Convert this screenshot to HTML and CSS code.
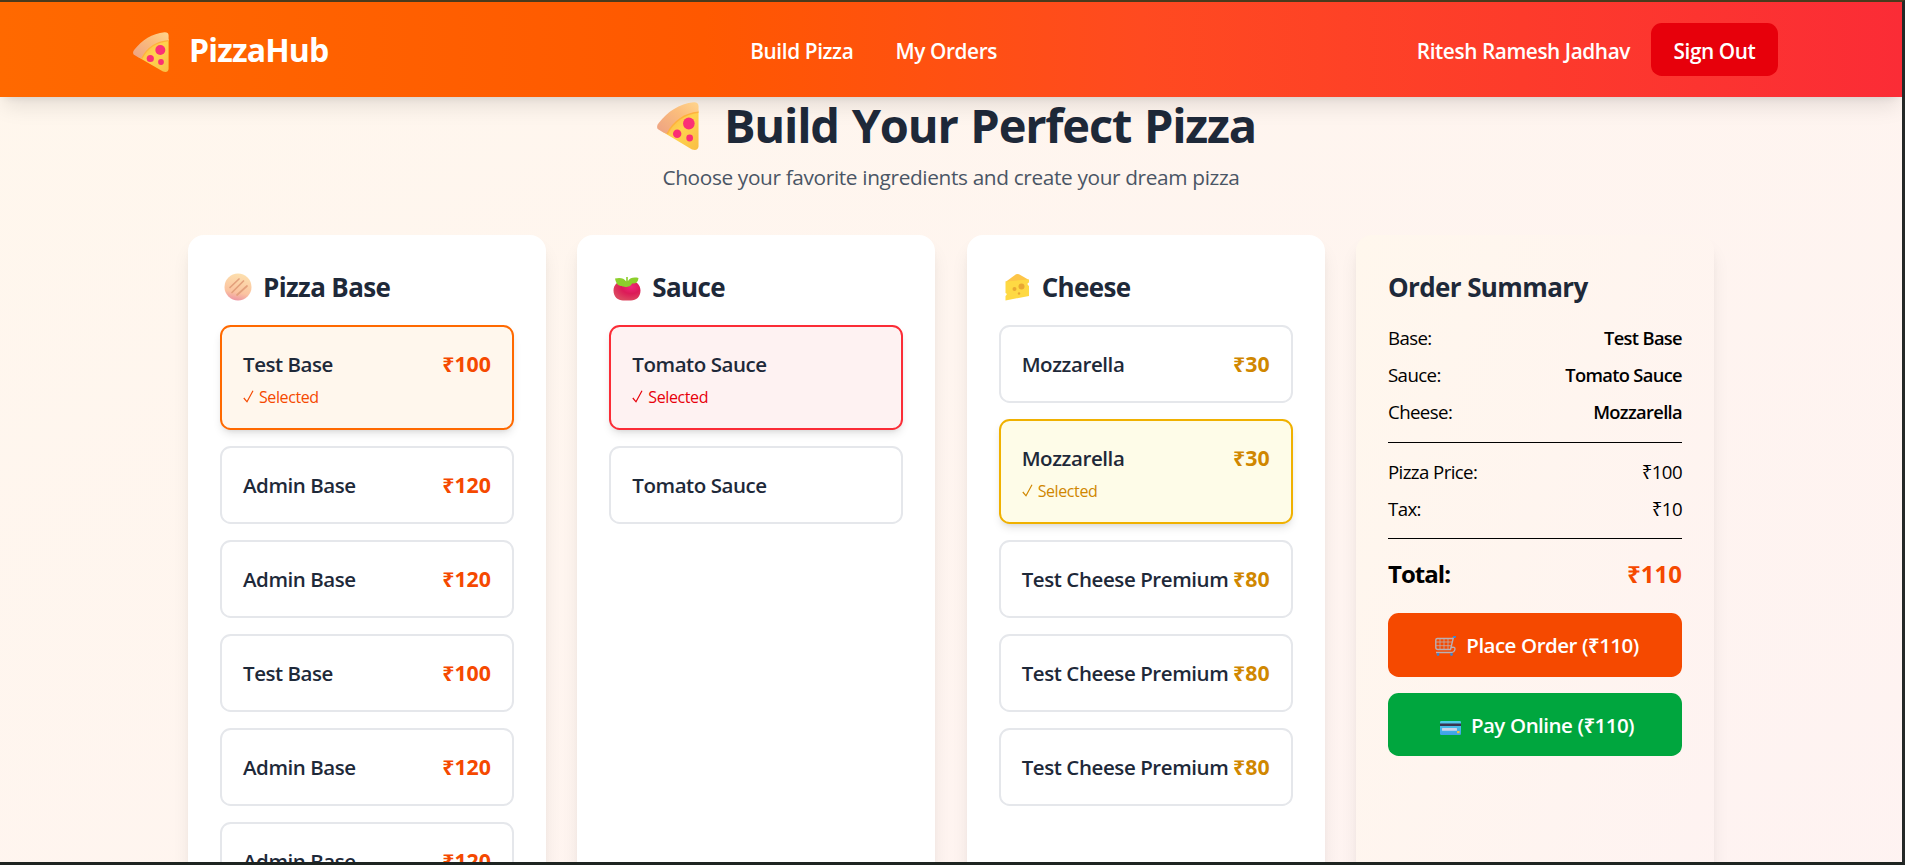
FILE: index.html
```html
<!DOCTYPE html>
<html lang="en">
<head>
<meta charset="utf-8">
<title>PizzaHub</title>
<link rel="stylesheet" href="styles.css">
</head>
<body>
<svg class="defs" aria-hidden="true">
  <defs>
    <linearGradient id="slice" x1="0" y1="0" x2="1" y2="1"><stop offset="0" stop-color="#f9b04a"/><stop offset=".5" stop-color="#ffd34e"/><stop offset="1" stop-color="#f9be45"/></linearGradient>
    <linearGradient id="crust" x1="0" y1="1" x2="1" y2="0"><stop offset="0" stop-color="#eda184"/><stop offset=".6" stop-color="#fbbd7c"/><stop offset="1" stop-color="#ffd58d"/></linearGradient>
    <linearGradient id="bread" x1=".6" y1="0" x2=".4" y2="1"><stop offset="0" stop-color="#fde0ae"/><stop offset=".7" stop-color="#fbc3a0"/><stop offset="1" stop-color="#ec96a4"/></linearGradient>
    <radialGradient id="tomato" cx=".65" cy=".3" r=".7"><stop offset="0" stop-color="#f0277a"/><stop offset=".5" stop-color="#dc1b58"/><stop offset="1" stop-color="#dc4560"/></radialGradient>
    <linearGradient id="card" x1="0" y1="0" x2="0" y2="1"><stop offset="0" stop-color="#4fd0ea"/><stop offset="1" stop-color="#3f9fe8"/></linearGradient>
    <symbol id="pizza" viewBox="0 0 36 40" preserveAspectRatio="none">
      <path fill="url(#slice)" d="M8 22C14 14 23 9 35.600 7V37Q35 41 30 39.500L5 25Z"/>
      <path fill="url(#crust)" d="M.6 22.500Q-.8 20 1.500 17.500C9 8 19 1.500 31.500.2Q35.500 0 35.600 3.500V8.500C24 9.500 14 15.500 8.500 26.500Q4 25 .6 22.500Z"/>
      <path fill="none" stroke="#ffb13d" stroke-width="1.300" d="M35.500 8.600C24 9.700 14 16 8.800 26.500"/>
      <circle cx="27.300" cy="18" r="5" fill="#fb3176"/><circle cx="17.300" cy="26.500" r="3.600" fill="#fb2f74"/><circle cx="28" cy="30" r="2.900" fill="#fb2f74"/>
    </symbol>
  </defs>
</svg>
<div class="screen">
  <header class="topbar">
    <a class="brand"><svg class="brand-icon"><use href="#pizza"/></svg><span>PizzaHub</span></a>
    <nav class="links"><a>Build Pizza</a><a>My Orders</a></nav>
    <div class="account"><span>Ritesh Ramesh Jadhav</span><button class="signout"><span>Sign Out</span></button></div>
  </header>
  <main class="page">
    <h1 class="title"><svg class="title-icon"><use href="#pizza"/></svg><span>Build Your Perfect Pizza</span></h1>
    <p class="subtitle"><span>Choose your favorite ingredients and create your dream pizza</span></p>
    <div class="columns">
      <section class="card base">
        <h2 class="heading"><svg class="heading-icon" viewBox="0 0 28 28"><circle cx="14" cy="14" r="13.500" fill="url(#bread)"/><g stroke="#e3a07c" stroke-width="1.700" stroke-linecap="round"><path d="M6 14.500L15 6M8 19.500L19.500 8M13 22L23 13"/></g></svg><span>Pizza Base</span></h2>
        <ul class="options">
          <li class="option selected"><div class="row"><span class="name">Test Base</span><span class="price">₹100</span></div><div class="mark"><svg class="check" viewBox="0 0 11 13"><path d="M.8 8L4 11.800L10 .8"/></svg><span>Selected</span></div></li>
          <li class="option"><div class="row"><span class="name">Admin Base</span><span class="price">₹120</span></div></li>
          <li class="option"><div class="row"><span class="name">Admin Base</span><span class="price">₹120</span></div></li>
          <li class="option"><div class="row"><span class="name">Test Base</span><span class="price">₹100</span></div></li>
          <li class="option"><div class="row"><span class="name">Admin Base</span><span class="price">₹120</span></div></li>
          <li class="option"><div class="row"><span class="name">Admin Base</span><span class="price">₹120</span></div></li>
        </ul>
      </section>
      <section class="card sauce">
        <h2 class="heading"><svg class="heading-icon" viewBox="0 0 28 28"><path fill="url(#tomato)" d="M14 9C20 6 27.500 10 27.500 17.500C27.500 24 23 27.500 18 27.500H10C5 27.500.5 24 .5 17.500C.5 10 8 6 14 9Z"/><path fill="#8ccf2c" d="M13.200 8.500V4H14.800V8.300C17 4.500 21 4 25.500 5C25 9 23 11 19 10.500C18 14.500 10 14.500 9 13C5 13 3 10.500 2 5.500C6 4.500 11 4.500 13.200 8.500Z"/></svg><span>Sauce</span></h2>
        <ul class="options">
          <li class="option selected"><div class="row"><span class="name">Tomato Sauce</span></div><div class="mark"><svg class="check" viewBox="0 0 11 13"><path d="M.8 8L4 11.800L10 .8"/></svg><span>Selected</span></div></li>
          <li class="option"><div class="row"><span class="name">Tomato Sauce</span></div></li>
        </ul>
      </section>
      <section class="card cheese">
        <h2 class="heading"><svg class="heading-icon" viewBox="0 0 28 28"><path fill="#fdc548" d="M2.500 9L13 1.300Q14.500.5 16 1.300L26 7L25 9Z"/><path fill="#fed943" d="M2.500 8.500L26 6.500V9.500Q23 10.500 26 13V23L2.500 27.500V23Q5 21 2.500 20Z"/><circle cx="18.500" cy="13.500" r="3" fill="#e9a832"/><circle cx="11.500" cy="16" r="2" fill="#e9a832"/><circle cx="16" cy="20.500" r="1.200" fill="#e9a832"/></svg><span>Cheese</span></h2>
        <ul class="options">
          <li class="option"><div class="row"><span class="name">Mozzarella</span><span class="price">₹30</span></div></li>
          <li class="option selected"><div class="row"><span class="name">Mozzarella</span><span class="price">₹30</span></div><div class="mark"><svg class="check" viewBox="0 0 11 13"><path d="M.8 8L4 11.800L10 .8"/></svg><span>Selected</span></div></li>
          <li class="option"><div class="row"><span class="name">Test Cheese Premium</span><span class="price">₹80</span></div></li>
          <li class="option"><div class="row"><span class="name">Test Cheese Premium</span><span class="price">₹80</span></div></li>
          <li class="option"><div class="row"><span class="name">Test Cheese Premium</span><span class="price">₹80</span></div></li>
        </ul>
      </section>
      <section class="card summary">
        <h2 class="heading"><span>Order Summary</span></h2>
        <dl class="lines">
          <div><dt>Base:</dt><dd class="strong">Test Base</dd></div>
          <div><dt>Sauce:</dt><dd class="strong">Tomato Sauce</dd></div>
          <div><dt>Cheese:</dt><dd class="strong">Mozzarella</dd></div>
        </dl>
        <hr>
        <dl class="lines">
          <div><dt>Pizza Price:</dt><dd>₹100</dd></div>
          <div><dt>Tax:</dt><dd>₹10</dd></div>
        </dl>
        <hr>
        <div class="total"><span>Total:</span><span class="amount">₹110</span></div>
        <button class="action place"><svg class="action-icon" viewBox="0 0 21 20"><g fill="none" stroke="#b9b0b4" stroke-width="1.400" stroke-linejoin="round"><path d="M20 1.200H18.500L15.500 13.500H3Q.8 13.500.8 11.500V4Q.8 2.500 2.500 2.500H17.500M16 11.500Q20 10.500 20 13Q19.500 16.500 16 16.500H1"/><path stroke-width=".8" d="M1 6H17M1 9.700H16M5 2.500V13.500M9 2.500V13.500M13 2.500V13.500"/></g><g fill="#3d83cf"><circle cx="3" cy="18.500" r="1.400"/><circle cx="16.500" cy="18.500" r="1.400"/><path d="M18 0h3v1.800h-3z"/></g></svg><span>Place Order (₹110)</span></button>
        <button class="action pay"><svg class="action-icon" viewBox="0 0 21 20"><rect y="5" width="21" height="14" rx="1.200" fill="url(#card)"/><path fill="#3a3350" d="M0 7.500h21v2.500H0z"/><rect x="2" y="12" width="15" height="2.800" rx=".6" fill="#cfd3ea"/><rect x="17" y="15" width="2.600" height="2.200" rx=".5" fill="#f0c445"/></svg><span>Pay Online (₹110)</span></button>
      </section>
    </div>
  </main>
</div>
</body>
</html>
```
FILE: styles.css
```css
* { box-sizing: border-box; margin: 0; padding: 0; }
body { font-family: "Open Sans", "Noto Sans", sans-serif; color: #000; }
button { border: 0; font: inherit; color: inherit; letter-spacing: inherit; }
ul { list-style: none; }
.defs { position: absolute; width: 0; height: 0; }
.screen { height: 865px; overflow: hidden; display: flex; flex-direction: column; border-top: 2px solid #4a3a1c; border-right: 3px solid #242827; border-bottom: 3px solid #1e2421; background: linear-gradient(to bottom right, #fff7ed, #fef2f2) 0 0 / 100% 1150px; }
.topbar { position: relative; flex: none; display: flex; align-items: center; justify-content: space-between; height: 95px; padding: 0 124px; color: #fff; background: linear-gradient(to right, #ff6900, #ff5800 37%, #ff4a20 60%, #fb2c36); box-shadow: 0 13px 20px -4px rgba(0,0,0,.1), 0 5px 8px -5px rgba(0,0,0,.1); }
.brand { display: flex; align-items: center; gap: 20px; padding-left: 9px; font-size: 32px; font-weight: 700; letter-spacing: -.85px; }
.brand-icon { width: 36px; height: 40px; position: relative; top: 2px; }
.links { display: flex; gap: 42px; padding: 2px 0 0 2px; font-size: 20.8px; font-weight: 600; letter-spacing: -.38px; }
.account { display: flex; align-items: center; gap: 21px; font-size: 20.8px; font-weight: 600; letter-spacing: -.42px; }
.account span { position: relative; top: 1px; }
.signout { height: 53px; width: 127px; border-radius: 10.67px; background: #e7000b; }
.page { flex: 1; min-height: 0; padding: 1px 188px 0; }
.title { display: flex; align-items: center; justify-content: center; gap: 25px; height: 53px; padding-left: 11px; font-size: 47px; letter-spacing: -1.2px; word-spacing: 1.8px; color: #1e2939; }
.title-icon { width: 42px; height: 48px; position: relative; top: 1px; }
.subtitle { margin: 10px 0 42px; line-height: 32px; font-size: 20.8px; letter-spacing: -.35px; text-align: center; color: #4a5565; }
.columns { display: grid; grid-template-columns: repeat(4, 1fr); gap: 31.33px; height: 900px; }
.card { padding: 32px; border-radius: 16px; background: #fff; box-shadow: 0 13px 20px -4px rgba(0,0,0,.1), 0 5px 8px -5px rgba(0,0,0,.1); }
.heading { display: flex; align-items: center; gap: 11px; height: 37px; margin-bottom: 21px; font-size: 26px; letter-spacing: -.62px; color: #1e2939; }
.heading span { padding-top: 3px; }
.heading-icon { width: 28px; height: 28px; margin: 2px 0 0 4px; }
.options { display: grid; gap: 16px; }
.option { padding: 21px; border: 2px solid #e5e7eb; border-radius: 10.67px; }
.row { display: flex; justify-content: space-between; height: 32px; line-height: 32px; font-size: 21.33px; color: #1e2939; white-space: nowrap; }
.name { font-size: 20.5px; font-weight: 600; letter-spacing: -.45px; }
.cheese .name { letter-spacing: -.42px; }
.price { font-weight: 700; color: #f54900; }
.mark { display: flex; align-items: center; gap: 5px; height: 22px; margin-top: 5px; padding-top: 1px; font-size: 16px; letter-spacing: -.4px; }
.check { width: 11px; height: 13px; fill: none; stroke: currentColor; stroke-width: 1.2; }
.selected { box-shadow: 0 5px 8px -1px rgba(0,0,0,.1), 0 3px 5px -3px rgba(0,0,0,.1); }
.base .selected { border-color: #ff6900; background: #fff7ed; color: #f54900; }
.sauce .selected { border-color: #fb2c36; background: #fef2f2; color: #e7000b; }
.cheese .selected { border-color: #f0b100; background: #fefce8; color: #d08700; }
.cheese .price { color: #d08700; }
.summary { background: linear-gradient(to bottom right, #fff7ed, #fef2f2); }
.lines { display: grid; gap: 10.33px; font-size: 18.67px; line-height: 26.67px; letter-spacing: -.6px; }
.lines div { display: flex; justify-content: space-between; }
.strong { font-size: 18.3px; font-weight: 600; letter-spacing: -.65px; }
hr { border: 0; border-top: 1px solid #000; margin: 16px 0; }
.total { display: flex; justify-content: space-between; font-size: 24px; font-weight: 700; line-height: 37px; letter-spacing: -.95px; }
.amount { color: #f54900; letter-spacing: 0; }
.action { display: flex; align-items: center; justify-content: center; gap: 10px; width: 100%; height: 64px; margin-top: 16px; padding-left: 4px; border-radius: 10.67px; font-size: 20.5px; font-weight: 600; letter-spacing: -.55px; word-spacing: .5px; color: #fff; }
.action-icon { width: 21px; height: 20px; position: relative; top: 1px; }
.place { margin-top: 21px; background: #f54900; }
.pay { height: 63px; background: #00a63e; }
```
